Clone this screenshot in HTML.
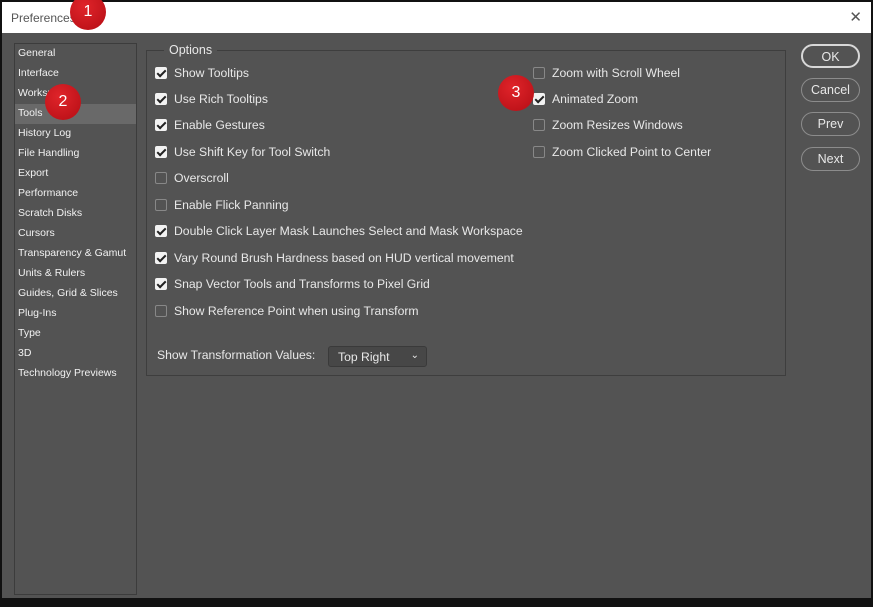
<!DOCTYPE html>
<html><head><style>
*{margin:0;padding:0;box-sizing:border-box}
body{width:873px;height:607px;background:#111;position:relative;overflow:hidden;font-family:"Liberation Sans",sans-serif;color:#e8e8e8}
.win{position:absolute;left:2px;top:2px;width:869px;height:596px;background:#535353}
.title{position:absolute;left:0;top:0;width:869px;height:31px;background:#fff;color:#555;font-size:12px;padding:9px 0 0 9px}
.x{position:absolute;right:9px;top:6px;font-size:15px;color:#555;font-family:"DejaVu Sans",sans-serif;font-weight:200}
.side{position:absolute;left:12px;top:41px;width:123px;height:552px;border:1px solid #3c3c3c}
.side div{height:20px;line-height:19px;font-size:10.5px;padding-left:3px;color:#f2f2f2}
.side .sel{background:#696969}
.grp{position:absolute;left:144px;top:48px;width:640px;height:326px;border:1px solid #3e3e3e}
.leg{position:absolute;left:162px;top:41px;background:#535353;padding:0 5px;font-size:12.5px}
.cb{position:absolute;font-size:12.2px;white-space:nowrap}
.cb i{position:absolute;left:-19px;top:1px;width:12px;height:12px;border:1px solid #888;border-radius:2px;background:#535353}
.cb i.on{background:#f2f2f2;border-color:#f2f2f2}
.cb i.on:after{content:"";position:absolute;left:3px;top:0px;width:3px;height:7px;border:solid #222;border-width:0 2px 2px 0;transform:rotate(45deg)}
.btn{position:absolute;left:801px;width:59px;height:24px;border:1px solid #8c8c8c;border-radius:12px;text-align:center;line-height:22px;font-size:12.5px}
.dot{position:absolute;width:36px;height:36px;border-radius:50%;background:radial-gradient(circle at 40% 35%,#e0242a,#b40d14);color:#fff;font-size:16px;text-align:center;line-height:36px}
.dd{position:absolute;left:328px;top:346px;width:99px;height:21px;border:1px solid #3a3a3a;border-radius:3px;background:#474747;font-size:12.2px;padding:3px 0 0 9px}
</style></head><body>
<div class="win">
<div class="title">Preferences<span class="x">✕</span></div>
<div class="side">
<div>General</div><div>Interface</div><div>Workspace</div><div class="sel">Tools</div><div>History Log</div><div>File Handling</div><div>Export</div><div>Performance</div><div>Scratch Disks</div><div>Cursors</div><div>Transparency &amp; Gamut</div><div>Units &amp; Rulers</div><div>Guides, Grid &amp; Slices</div><div>Plug-Ins</div><div>Type</div><div>3D</div><div>Technology Previews</div>
</div>
<div class="grp"></div>
<div class="leg">Options</div>
<div class="cb" style="left:172px;top:64px"><i class="on"></i>Show Tooltips</div>
<div class="cb" style="left:172px;top:90px"><i class="on"></i>Use Rich Tooltips</div>
<div class="cb" style="left:172px;top:116px"><i class="on"></i>Enable Gestures</div>
<div class="cb" style="left:172px;top:143px"><i class="on"></i>Use Shift Key for Tool Switch</div>
<div class="cb" style="left:172px;top:169px"><i></i>Overscroll</div>
<div class="cb" style="left:172px;top:196px"><i></i>Enable Flick Panning</div>
<div class="cb" style="left:172px;top:222px"><i class="on"></i>Double Click Layer Mask Launches Select and Mask Workspace</div>
<div class="cb" style="left:172px;top:249px"><i class="on"></i>Vary Round Brush Hardness based on HUD vertical movement</div>
<div class="cb" style="left:172px;top:275px"><i class="on"></i>Snap Vector Tools and Transforms to Pixel Grid</div>
<div class="cb" style="left:172px;top:302px"><i></i>Show Reference Point when using Transform</div>
<div class="cb" style="left:550px;top:64px"><i></i>Zoom with Scroll Wheel</div>
<div class="cb" style="left:550px;top:90px"><i class="on"></i>Animated Zoom</div>
<div class="cb" style="left:550px;top:116px"><i></i>Zoom Resizes Windows</div>
<div class="cb" style="left:550px;top:143px"><i></i>Zoom Clicked Point to Center</div>
<div class="cb" style="left:155px;top:346px">Show Transformation Values:</div>
</div>
<div class="dd">Top Right<span style="position:absolute;right:7px;top:3px;font-size:10px">⌄</span></div>
<div class="btn" style="top:44px;border:2px solid #d8d8d8">OK</div>
<div class="btn" style="top:78px">Cancel</div>
<div class="btn" style="top:112px">Prev</div>
<div class="btn" style="top:147px">Next</div>
<div class="dot" style="left:70px;top:-6px">1</div>
<div class="dot" style="left:45px;top:84px">2</div>
<div class="dot" style="left:498px;top:75px">3</div>
</body></html>
